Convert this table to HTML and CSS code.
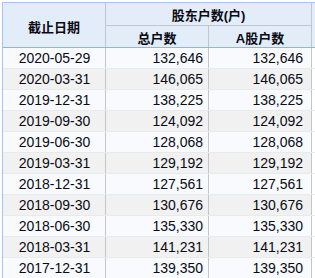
FILE: index.html
```html
<!DOCTYPE html>
<html>
<head>
<meta charset="utf-8">
<link rel="stylesheet" href="styles.css">
</head>
<body>
<div class="table">
  <div class="head">
    <div class="hc date-h">截止日期</div>
    <div class="hc group-h">股东户数(户)</div>
    <div class="hc pad-h span2"></div>
    <div class="hc sub-h">总户数</div>
    <div class="hc sub-h">A股户数</div>
  </div>
  <div class="row odd"><div class="c d">2020-05-29</div><div class="c n">132,646</div><div class="c n">132,646</div><div class="pad"></div></div>
  <div class="row even"><div class="c d">2020-03-31</div><div class="c n">146,065</div><div class="c n">146,065</div><div class="pad"></div></div>
  <div class="row odd"><div class="c d">2019-12-31</div><div class="c n">138,225</div><div class="c n">138,225</div><div class="pad"></div></div>
  <div class="row even"><div class="c d">2019-09-30</div><div class="c n">124,092</div><div class="c n">124,092</div><div class="pad"></div></div>
  <div class="row odd"><div class="c d">2019-06-30</div><div class="c n">128,068</div><div class="c n">128,068</div><div class="pad"></div></div>
  <div class="row even"><div class="c d">2019-03-31</div><div class="c n">129,192</div><div class="c n">129,192</div><div class="pad"></div></div>
  <div class="row odd"><div class="c d">2018-12-31</div><div class="c n">127,561</div><div class="c n">127,561</div><div class="pad"></div></div>
  <div class="row even"><div class="c d">2018-09-30</div><div class="c n">130,676</div><div class="c n">130,676</div><div class="pad"></div></div>
  <div class="row odd"><div class="c d">2018-06-30</div><div class="c n">135,330</div><div class="c n">135,330</div><div class="pad"></div></div>
  <div class="row even"><div class="c d">2018-03-31</div><div class="c n">141,231</div><div class="c n">141,231</div><div class="pad"></div></div>
  <div class="row odd"><div class="c d">2017-12-31</div><div class="c n">139,350</div><div class="c n">139,350</div><div class="pad"></div></div>
</div>
</body>
</html>
```
FILE: styles.css
```css
html, body {
  margin: 0;
  padding: 0;
  background: #ffffff;
  overflow: hidden;
}
.table {
  margin: 2px 0 0 2px;
  width: 313px;
  border-top: 1px solid #a6c4ec;
  border-left: 1px solid #a6c4ec;
  font-family: "Liberation Sans", Arial, sans-serif;
  color: #0a0a14;
}
.head {
  display: grid;
  grid-template-columns: 103px 103px 103px 4px;
  grid-template-rows: 23px 21px;
  background: #e3edf9;
  border-bottom: 1px solid #8fb4e8;
  font-family: "Liberation Sans", "Noto Sans CJK SC", sans-serif;
  font-weight: bold;
  font-size: 13px;
}
.hc {
  box-sizing: border-box;
  display: flex;
  align-items: center;
  justify-content: center;
  border-right: 1px solid #c2c6cc;
}
.date-h {
  grid-row: 1 / span 2;
  grid-column: 1;
  padding-top: 2px;
}
.group-h {
  grid-row: 1;
  grid-column: 2 / span 2;
  border-bottom: 1px solid #c2c6cc;
}
.pad-h {
  grid-column: 4;
  grid-row: 1 / span 2;
  border-right: none;
}
.sub-h {
  padding-top: 1px;
}
.row {
  display: grid;
  grid-template-columns: 103px 103px 103px 4px;
  height: 21px;
  box-sizing: border-box;
  border-bottom: 1px solid #e9eaec;
  font-size: 14px;
}
.odd { background: #f8fafd; }
.even { background: #f1f1f1; }
.c {
  box-sizing: border-box;
  border-right: 1px solid #c2c6cc;
  display: flex;
  align-items: center;
  line-height: 20px;
}
.d { justify-content: center; padding-left: 1px; }
.n { justify-content: flex-end; padding-right: 5px; }
.row .c:nth-child(3) { padding-right: 8px; }
.pad { background: #ffffff; }
```
